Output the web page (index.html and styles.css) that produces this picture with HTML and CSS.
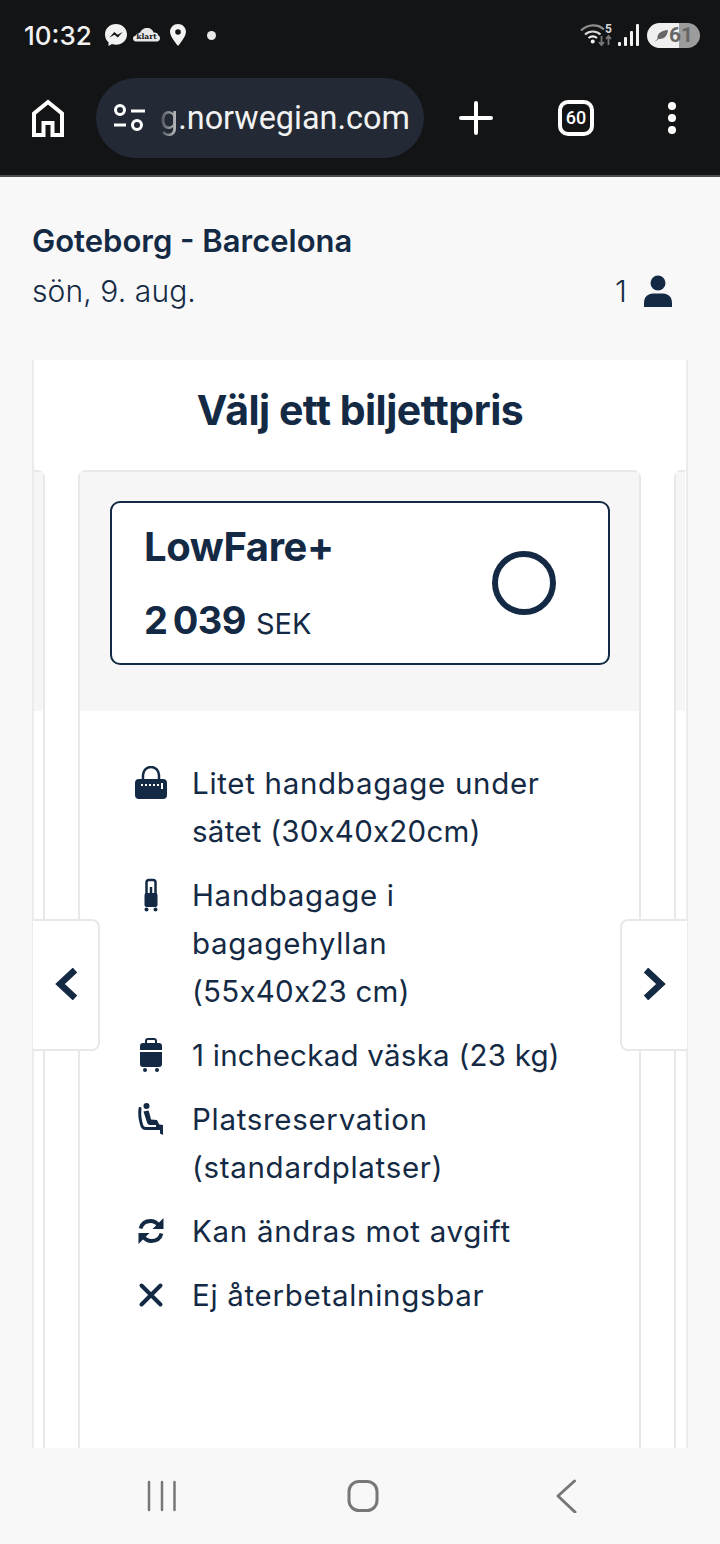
FILE: index.html
```html
<!DOCTYPE html>
<html lang="sv">
<head>
    <meta charset="UTF-8">
    <title>Välj ett biljettpris</title>
    <link rel="stylesheet" href="styles.css">
</head>
<body>
<div class="phone">
    <div class="chrome">
        <div class="status">
            <span class="time">10:32</span>
            <svg class="st-msg" width="24" height="24" viewBox="0 0 24 24"><path fill="#f2f2f2" d="M12 1C5.800 1 1 5.500 1 11.500c0 3.200 1.300 5.900 3.500 7.800V23l3.500-1.900c1.200.4 2.600.6 4 .6 6.200 0 11-4.500 11-10.200C23 5.500 18.200 1 12 1z"/><path fill="#131416" d="M5.500 14.500l4.800-5.600 3.300 2.800 5-2.800-4.800 5.600-3.300-2.800z"/></svg>
            <svg class="st-cloud" width="27" height="14" viewBox="0 0 27 14"><path fill="#e8e8e8" d="M3 13.500C1 13.500 0 12 0 10.500 0 8.800 1.300 7.600 3 7.500 3.500 5.500 5.200 4.500 7 4.800 8.300 1.800 11-.2 14-.2c3.400 0 5.800 2 6.600 4.700 2.700-.3 4.300 1 4.800 3 1 .4 1.600 1.600 1.600 2.800 0 1.700-1.200 3.200-3 3.200z"/><text x="13.500" y="11" text-anchor="middle" class="klart">klart</text></svg>
            <svg class="st-pin" width="16" height="22" viewBox="0 0 16 22"><path fill-rule="evenodd" fill="#f2f2f2" d="M8 0C3.600 0 0 3.400 0 7.800 0 13 8 22 8 22s8-9 8-14.200C16 3.400 12.400 0 8 0zm0 5.200a2.800 2.800 0 1 1 0 5.600 2.800 2.800 0 0 1 0-5.600z"/></svg>
            <span class="st-dot"></span>
            <span class="st-space"></span>
            <svg class="st-wifi" width="34" height="24" viewBox="0 0 34 24">
                <path fill="none" stroke="#8f8f8f" stroke-width="2.200" d="M1 7.500C8 .8 18 .8 24 6.500"/>
                <path fill="none" stroke="#d8d8d8" stroke-width="2.200" d="M5 11.500c4.500-4 11-4 15.500 0"/>
                <path fill="none" stroke="#f2f2f2" stroke-width="2.200" d="M8.500 15c2.500-2 6-2 8.500 0"/>
                <circle cx="12.700" cy="18.500" r="2" fill="#f2f2f2"/>
                <text x="25" y="10" class="wifi-num">5</text>
                <path fill="none" stroke="#777" stroke-width="1.800" d="M21.500 13v9m-2.500-3l2.500 3 2.500-3M28.500 22v-9m-2.500 3l2.500-3 2.500 3"/>
            </svg>
            <svg class="st-signal" width="22" height="24" viewBox="0 0 22 24"><rect x="0" y="19" width="3" height="4" rx="1" fill="#f2f2f2"/><rect x="6" y="14" width="3" height="9" rx="1" fill="#f2f2f2"/><rect x="12" y="8" width="3" height="15" rx="1" fill="#f2f2f2"/><rect x="18" y="1" width="3" height="22" rx="1" fill="#f2f2f2"/></svg>
            <div class="battery">
                <svg width="14" height="13" viewBox="0 0 14 13"><path fill="#666" d="M0 12.500C2 11.500 3 10.500 3.500 9.500 3 4 8 1.500 14 1c-.5 5-3 9.500-9.500 9-1 1-2.500 2-4.500 2.500z"/></svg>
                <span class="batt-num">61</span>
            </div>
        </div>
        <div class="toolbar">
            <svg class="tb-home" width="34" height="38" viewBox="0 0 34 38"><path fill="none" stroke="#fff" stroke-width="4" d="M3 36V14.500L17 3l14 11.500V36h-9.500V24h-9v12z"/></svg>
            <div class="urlbar">
                <svg width="32" height="28" viewBox="0 0 32 28"><g fill="none" stroke="#fff" stroke-width="3"><circle cx="7" cy="6" r="4.500"/><circle cx="24" cy="21" r="4.500"/><path d="M18 7h14M1 21h12"/></g></svg>
                <span class="url"><span class="url-fade">g</span>.norwegian.com</span>
            </div>
            <svg class="tb-plus" width="34" height="34" viewBox="0 0 34 34"><path stroke="#fff" stroke-width="4" stroke-linecap="round" d="M17 2v30M2 17h30"/></svg>
            <div class="tabs">60</div>
            <div class="dots"><span></span><span></span><span></span></div>
        </div>
    </div>

    <main class="page">
        <header class="trip">
            <h1>Goteborg - Barcelona</h1>
            <div class="trip-row">
                <span>sön, 9. aug.</span>
                <span class="pax">1
                    <svg width="28" height="32" viewBox="0 0 28 32"><circle cx="14" cy="8" r="7.500" fill="#142a44"/><path fill="#142a44" d="M0 32v-4c0-6 4-9.500 9-9.500h10c5 0 9 3.500 9 9.500v4z"/></svg>
                </span>
            </div>
        </header>

        <section class="panel">
            <h2>Välj ett biljettpris</h2>
            <div class="carousel">
                <div class="fare fare-peek fare-left"><div class="fare-head"></div></div>
                <div class="fare">
                    <div class="fare-head">
                        <div class="fare-box">
                            <div class="fare-text">
                                <div class="fare-name">LowFare+</div>
                                <div class="fare-price"><b>2 039</b> SEK</div>
                            </div>
                            <span class="radio"></span>
                        </div>
                    </div>
                    <ul class="features">
                        <li>
                            <svg width="32" height="34" viewBox="0 0 32 34"><path fill="none" stroke="#142a44" stroke-width="2.500" d="M8 15V9a8 8 0 0 1 16 0v6"/><rect x="0" y="13" width="32" height="20" rx="4" fill="#142a44"/><g fill="#fff"><rect x="6" y="18" width="2" height="2"/><rect x="10" y="18" width="2" height="2"/><rect x="14" y="18" width="2" height="2"/><rect x="18" y="18" width="2" height="2"/><rect x="22" y="18" width="2" height="2"/><rect x="26" y="17" width="2" height="6"/></g></svg>
                            <div>
                                <div>Litet handbagage under</div>
                                <div class="tight">sätet (30x40x20cm)</div>
                            </div>
                        </li>
                        <li>
                            <svg width="32" height="34" viewBox="0 0 32 34"><path fill="none" stroke="#142a44" stroke-width="2.500" d="M11.500 16V4.500a2.500 2.500 0 0 1 2.500-2.500h4a2.500 2.500 0 0 1 2.500 2.500V16M16 9v6"/><rect x="9.500" y="15" width="13" height="14" rx="2" fill="#142a44"/><circle cx="11.500" cy="31.500" r="2" fill="#142a44"/><circle cx="20.500" cy="31.500" r="2" fill="#142a44"/></svg>
                            <div>
                                <div>Handbagage i bagagehyllan</div>
                                <div class="tight">(55x40x23 cm)</div>
                            </div>
                        </li>
                        <li>
                            <svg width="32" height="34" viewBox="0 0 32 34"><path fill="none" stroke="#142a44" stroke-width="2" d="M11 6V3a2 2 0 0 1 2-2h6a2 2 0 0 1 2 2v3"/><path fill="#142a44" d="M8 5h16a3 3 0 0 1 3 3v4H5V8a3 3 0 0 1 3-3zM5 14h22v12a3 3 0 0 1-3 3H8a3 3 0 0 1-3-3z"/><circle cx="10" cy="32" r="2" fill="#142a44"/><circle cx="22" cy="32" r="2" fill="#142a44"/></svg>
                            <div class="tight">1 incheckad väska (23 kg)</div>
                        </li>
                        <li>
                            <svg width="32" height="34" viewBox="0 0 32 34"><circle cx="11.500" cy="4" r="3" fill="#142a44"/><path fill="#142a44" d="M8.500 9.500l5-1c1 2.500 2 6.500 2.500 9l6 .5 2.500 5h-9.500c-1.500 0-2.500-1-3-2.500z"/><path fill="none" stroke="#142a44" stroke-width="3" stroke-linecap="round" d="M5 6.500c-.8 6 .2 12 1.800 17 .7 2 2 3 4 3H22"/><path fill="#142a44" d="M21 23l3.500-.5 3.500.5v10l-3-1.500V28h-4z"/></svg>
                            <div>Platsreservation (standardplatser)</div>
                        </li>
                        <li>
                            <svg width="32" height="34" viewBox="0 0 32 34"><g fill="none" stroke="#142a44" stroke-width="3.800"><path d="M5.500 14.500C6.800 9.800 10.500 7 15.500 7c3.500 0 6 1.300 8.500 4.500"/><path d="M26.500 19.500C25.200 24.200 21.500 27 16.500 27c-3.500 0-6-1.300-8.500-4.500"/></g><path fill="#142a44" d="M28.500 4v11h-11zM3.500 30V19h11z"/></svg>
                            <div>Kan ändras mot avgift</div>
                        </li>
                        <li>
                            <svg width="32" height="34" viewBox="0 0 32 34"><path stroke="#142a44" stroke-width="4" stroke-linecap="round" d="M6.500 7.500l19 19M25.500 7.500l-19 19"/></svg>
                            <div>Ej återbetalningsbar</div>
                        </li>
                    </ul>
                </div>
                <div class="fare fare-peek fare-right"><div class="fare-head"></div></div>
            </div>
            <button class="arrow arrow-left" aria-label="Föregående">
                <svg width="24" height="32" viewBox="0 0 24 32"><path fill="none" stroke="#142a44" stroke-width="6.500" d="M21 2L6 16l15 14"/></svg>
            </button>
            <button class="arrow arrow-right" aria-label="Nästa">
                <svg width="24" height="32" viewBox="0 0 24 32"><path fill="none" stroke="#142a44" stroke-width="6.500" d="M3 2l15 14L3 30"/></svg>
            </button>
        </section>
    </main>

    <nav class="sysnav">
        <svg width="32" height="32" viewBox="0 0 32 32"><path stroke="#777" stroke-width="2.500" stroke-linecap="round" d="M3 2v28M16 2v28M28.500 2v28"/></svg>
        <svg width="32" height="34" viewBox="0 0 32 34"><rect x="2" y="2.500" width="28" height="29" rx="10" fill="none" stroke="#777" stroke-width="3"/></svg>
        <svg class="nav-back" width="22" height="34" viewBox="0 0 22 34"><path fill="none" stroke="#777" stroke-width="3" stroke-linecap="round" stroke-linejoin="round" d="M19.500 2L3 17l17 16"/></svg>
    </nav>
</div>
</body>
</html>
```

FILE: styles.css
```css
* {
    box-sizing: border-box;
}
body {
    margin: 0;
    background: #f8f8f8;
    color: #142a44;
    font-family: Inter, "Liberation Sans", sans-serif;
}
.phone {
    width: 720px;
    height: 1544px;
    display: flex;
    flex-direction: column;
    overflow: hidden;
}

/* browser chrome */
.chrome {
    height: 177px;
    background: #131416;
    border-bottom: 2px solid #4a4a52;
    color: #fff;
    flex: none;
}
.status {
    height: 70px;
    display: flex;
    align-items: center;
    padding: 0 20px 0 24px;
}
.time {
    font-size: 26px;
    font-weight: 500;
    color: #f2f2f2;
    width: 80px;
}
.st-cloud {
    margin-left: 5px;
}
.klart {
    font: 900 7.500px "DejaVu Serif", serif;
    fill: #131416;
}
.st-pin {
    margin-left: 10px;
}
.st-dot {
    width: 9px;
    height: 9px;
    border-radius: 50%;
    background: #e8e8e8;
    margin-left: 21px;
}
.st-space {
    flex: 1;
}
.wifi-num {
    font: 700 12px Roboto, sans-serif;
    fill: #d8d8d8;
}
.st-signal {
    margin-left: 4px;
}
.battery {
    width: 53px;
    height: 25px;
    margin-left: 7px;
    border-radius: 13px;
    background: linear-gradient(90deg, #efefef 0 32px, #9c9c9c 32px);
    display: flex;
    align-items: center;
    gap: 1px;
    padding-left: 7px;
}
.batt-num {
    font: 700 21px Roboto, sans-serif;
    color: #666;
}
.toolbar {
    height: 105px;
    display: flex;
    align-items: center;
    padding: 0 0 10px 31px;
}
.tb-home {
    flex: none;
}
.urlbar {
    width: 328px;
    height: 80px;
    margin-left: 31px;
    border-radius: 40px;
    background: #232a35;
    display: flex;
    align-items: center;
    gap: 15px;
    padding-left: 17px;
}
.url {
    font: 400 32.400px Roboto, sans-serif;
    color: #f2f2f2;
}
.url-fade {
    background: linear-gradient(90deg, #4a4f57, #c8c8c8);
    -webkit-background-clip: text;
    background-clip: text;
    color: transparent;
}
.tb-plus {
    margin-left: 35px;
}
.tabs {
    width: 36px;
    height: 36px;
    margin-left: 65px;
    border: 4px solid #fff;
    border-radius: 10px;
    font: 500 18px Roboto, sans-serif;
    display: flex;
    align-items: center;
    justify-content: center;
}
.dots {
    margin-left: 74px;
    display: flex;
    flex-direction: column;
    gap: 4px;
}
.dots span {
    width: 8px;
    height: 8px;
    border-radius: 50%;
    background: #fff;
}

/* page */
.page {
    flex: 1;
    min-height: 0;
    padding: 0 32px;
    overflow: hidden;
}
.trip {
    height: 183px;
    padding-top: 44px;
}
.trip h1 {
    margin: 0;
    font-size: 31px;
    font-weight: 600;
    line-height: 40px;
}
.trip-row {
    display: flex;
    justify-content: space-between;
    font-size: 30px;
    font-weight: 300;
    letter-spacing: .1px;
    line-height: 40px;
    margin-top: 10px;
}
.pax {
    display: flex;
    align-items: center;
    gap: 17px;
    padding-right: 16px;
}
.panel {
    height: 1100px;
    background: #fff;
    border-left: 2px solid #ebebeb;
    border-right: 2px solid #ebebeb;
}
.panel h2 {
    margin: 0;
    height: 110px;
    padding-top: 26px;
    text-align: center;
    font-size: 41px;
    font-weight: 700;
    line-height: 48px;
    letter-spacing: -.5px;
}
.carousel {
    display: grid;
    grid-template-columns: 11px 563px 11px;
    column-gap: 33px;
    height: 1000px;
}
.fare {
    border: 2px solid #e8e8e8;
    border-bottom: 0;
    border-radius: 8px 8px 0 0;
}
.fare-peek .fare-head {
    height: 239px;
    padding: 0;
}
.fare-left {
    border-left: 0;
    border-radius: 0 8px 0 0;
}
.fare-right {
    border-right: 0;
    border-radius: 8px 0 0 0;
}
.fare-head {
    background: #f6f6f6;
    padding: 29px 29px 46px 30px;
}
.fare-box {
    height: 164px;
    background: #fff;
    border: 2px solid #142a44;
    border-radius: 10px;
    display: flex;
    align-items: center;
    justify-content: space-between;
    padding: 0 52px 0 32px;
}
.fare-text {
    margin-top: 6px;
}
.fare-name {
    font-size: 40px;
    font-weight: 700;
    letter-spacing: -.4px;
    line-height: 46px;
}
.fare-price {
    font-size: 29px;
    line-height: 48px;
    margin-top: 26px;
    font-weight: 400;
}
.fare-price b {
    font-size: 38px;
    letter-spacing: -.6px;
    margin-right: 2px;
    word-spacing: -3px;
}
.radio {
    width: 64px;
    height: 64px;
    border: 6px solid #142a44;
    border-radius: 50%;
}
.features {
    list-style: none;
    margin: 0;
    padding: 48px 50px 0 55px;
    display: flex;
    flex-direction: column;
    gap: 16px;
}
.features li {
    display: flex;
    gap: 25px;
    font-size: 29.500px;
    font-weight: 400;
    line-height: 48px;
    letter-spacing: .7px;
}
.features svg {
    flex: none;
    margin-top: 7px;
}
.tight {
    letter-spacing: .25px;
}

/* arrows over the carousel */
.arrow {
    position: absolute;
    top: 919px;
    width: 67px;
    height: 132px;
    padding: 0 0 2px;
    background: #fff;
    border: 2px solid #e8e8e8;
    display: flex;
    align-items: center;
    justify-content: center;
}
.arrow-left {
    left: 33px;
    border-left: 0;
    border-radius: 0 8px 8px 0;
}
.arrow-right {
    left: 620px;
    border-right: 0;
    border-radius: 8px 0 0 8px;
}

/* android nav */
.sysnav {
    height: 96px;
    flex: none;
    background: #f8f8f8;
    display: flex;
    align-items: center;
    gap: 169px;
    padding-left: 146px;
}
.nav-back {
    margin-left: 7px;
}
```
